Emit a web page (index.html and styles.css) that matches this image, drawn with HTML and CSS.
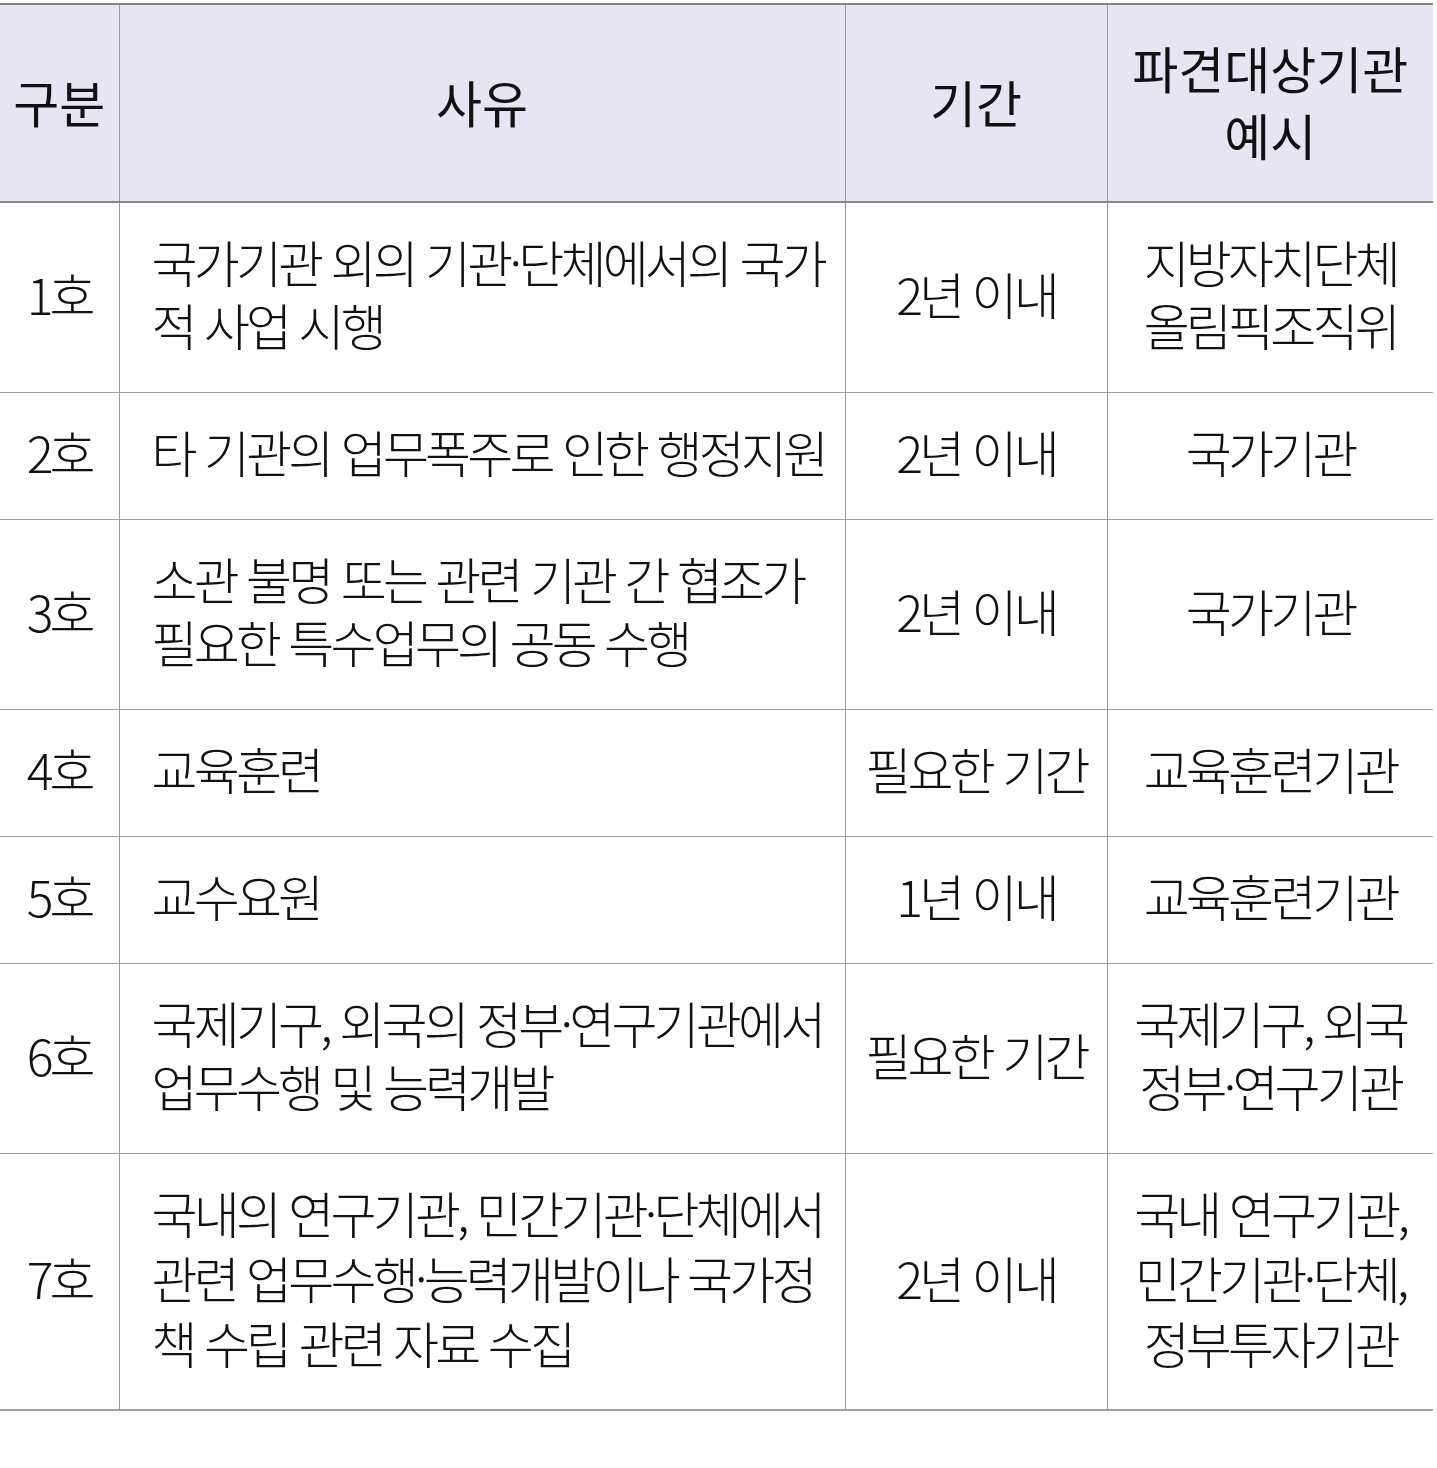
FILE: index.html
```html
<!DOCTYPE html>
<html lang="ko">
<head>
<meta charset="utf-8">
<link rel="stylesheet" href="styles.css">
</head>
<body>
<table class="tbl">
  <colgroup>
    <col class="c1"><col class="c2"><col class="c3"><col class="c4">
  </colgroup>
  <thead>
    <tr>
      <th>구분</th>
      <th>사유</th>
      <th>기간</th>
      <th>파견대상기관<br>예시</th>
    </tr>
  </thead>
  <tbody>
    <tr>
      <td>1호</td>
      <td class="reason">국가기관 외의 기관·단체에서의 국가<br>적 사업 시행</td>
      <td>2년 이내</td>
      <td>지방자치단체<br>올림픽조직위</td>
    </tr>
    <tr>
      <td>2호</td>
      <td class="reason">타 기관의 업무폭주로 인한 행정지원</td>
      <td>2년 이내</td>
      <td>국가기관</td>
    </tr>
    <tr>
      <td>3호</td>
      <td class="reason">소관 불명 또는 관련 기관 간 협조가<br>필요한 특수업무의 공동 수행</td>
      <td>2년 이내</td>
      <td>국가기관</td>
    </tr>
    <tr>
      <td>4호</td>
      <td class="reason">교육훈련</td>
      <td>필요한 기간</td>
      <td>교육훈련기관</td>
    </tr>
    <tr>
      <td>5호</td>
      <td class="reason">교수요원</td>
      <td>1년 이내</td>
      <td>교육훈련기관</td>
    </tr>
    <tr>
      <td>6호</td>
      <td class="reason">국제기구, 외국의 정부·연구기관에서<br>업무수행 및 능력개발</td>
      <td>필요한 기간</td>
      <td>국제기구, 외국<br>정부·연구기관</td>
    </tr>
    <tr class="last">
      <td>7호</td>
      <td class="reason">국내의 연구기관, 민간기관·단체에서<br>관련 업무수행·능력개발이나 국가정<br>책 수립 관련 자료 수집</td>
      <td>2년 이내</td>
      <td>국내 연구기관,<br>민간기관·단체,<br>정부투자기관</td>
    </tr>
  </tbody>
</table>
</body>
</html>
```
FILE: styles.css
```css
html, body {
  margin: 0;
  padding: 0;
  background: #ffffff;
}
body {
  padding-top: 3px;
  font-family: "Noto Sans CJK KR", "Noto Sans", sans-serif;
  color: #111111;
}
.tbl {
  width: 1433px;
  border-collapse: collapse;
  table-layout: fixed;
}
.c1 { width: 119px; }
.c2 { width: 726px; }
.c3 { width: 262px; }
.c4 { width: 326px; }
.tbl th {
  background: #e8e5f3;
  font-weight: 400;
  font-size: 50px;
  letter-spacing: 0;
  line-height: 67px;
  height: 192px;
  padding: 0 0 4px;
  text-align: center;
  border-top: 2px solid #888888;
  border-bottom: 2px solid #888888;
  border-left: 1px solid #999999;
  color: #111111;
}
.tbl td {
  font-weight: 300;
  font-size: 50px;
  letter-spacing: -3.8px;
  line-height: 63px;
  padding: 27px 0 36px;
  text-align: center;
  border-bottom: 1px solid #a0a0a0;
  border-left: 1px solid #999999;
}
.tbl th:first-child,
.tbl td:first-child {
  border-left: none;
}
.tbl td.reason {
  text-align: left;
  padding-left: 32px;
}
.tbl tr.last td {
  line-height: 65px;
  padding-top: 26px;
  padding-bottom: 34px;
  border-bottom: 2px solid #a0a0a0;
}
```
